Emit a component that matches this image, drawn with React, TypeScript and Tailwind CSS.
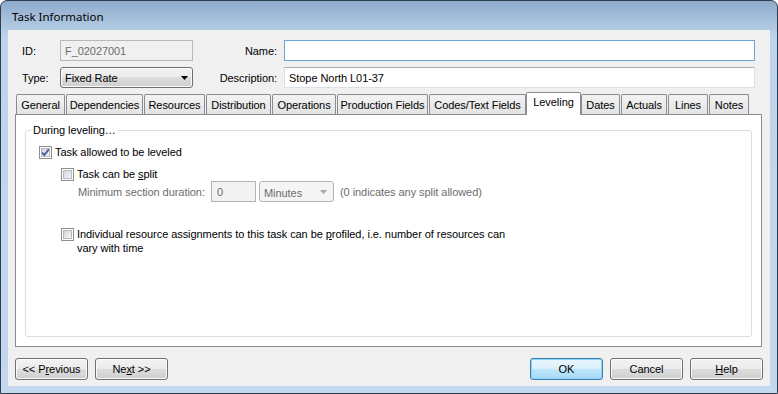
import React from "react";

const btnFace =
  "bg-[linear-gradient(to_bottom,#f2f2f2_0%,#ebebeb_50%,#dddddd_50%,#cfcfcf_100%)] border border-[#707070] rounded-[3px] shadow-[inset_0_0_0_1px_#fbfbfb]";

function Checkbox({ checked = false }: { checked?: boolean }) {
  return (
    <span className="relative w-[13px] h-[13px] shrink-0 border border-[#8e8f8f] bg-white p-[1px] flex">
      <span className="flex-1 border border-[#b4b9bf] bg-linear-to-br from-[#d3d6da] to-[#f7f7f7]" />
      {checked && (
        <svg
          className="absolute inset-0"
          width="11"
          height="11"
          viewBox="0 0 11 11"
        >
          <path
            d="M2.2 5.6 L4.4 8 L8.8 2.4"
            fill="none"
            stroke="#4a5f9f"
            strokeWidth="1.9"
          />
        </svg>
      )}
    </span>
  );
}

function Arrow({ color = "#000" }: { color?: string }) {
  return (
    <svg width="7" height="4" viewBox="0 0 7 4">
      <path d="M0 0 H7 L3.5 4 Z" fill={color} />
    </svg>
  );
}

function Button({
  children,
  primary = false,
}: {
  children: React.ReactNode;
  primary?: boolean;
}) {
  return (
    <div
      className={`w-[73px] h-[22px] flex items-center justify-center ${
        primary
          ? "bg-[linear-gradient(to_bottom,#eaf6fd_0%,#d9f0fc_50%,#bee6fd_50%,#a7d9f5_100%)] border border-[#3c7fb1] rounded-[3px] shadow-[inset_0_0_0_1px_#8fd3f5]"
          : btnFace
      }`}
    >
      {children}
    </div>
  );
}

const tabs: [string, number][] = [
  ["General", 49],
  ["Dependencies", 77],
  ["Resources", 61],
  ["Distribution", 65],
  ["Operations", 64],
  ["Production Fields", 91],
  ["Codes/Text Fields", 97],
  ["Leveling", 55],
  ["Dates", 39],
  ["Actuals", 46],
  ["Lines", 40],
  ["Notes", 40],
];

export default function App() {
  return (
    <div className="w-[778px] h-[394px] flex flex-col border border-[#2e3d50] rounded-t-[7px] bg-linear-to-b from-[#8fabcb] via-[#bcd4ec] via-[9%] to-[#c3d8ee] font-['Liberation_Sans',Arial,sans-serif] text-[11px] leading-[14px] tracking-[-0.06px] text-black">
      {/* title bar */}
      <div className="h-[29px] flex items-center pl-[11px] pt-[2px] font-['Noto_Sans',sans-serif] text-[11.5px] tracking-normal">
        Task Information
      </div>

      {/* client area */}
      <div className="ml-[7px] w-[762px] h-[356px] bg-[#f0f0f0] flex flex-col">
        {/* ID / Name */}
        <div className="flex items-center h-[21px] mt-[10px] pl-[14px]">
          <span className="w-[38px]">ID:</span>
          <div className="w-[133px] h-[21px] border border-[#b5b8bd] bg-[#f0f0f0] flex items-center pl-[4px] text-[#6d6d6d]">
            F_02027001
          </div>
          <span className="w-[91px] text-right pr-[7px]">Name:</span>
          <div className="w-[471px] h-[21px] border border-[#6ea3d6] bg-white" />
        </div>

        {/* Type / Description */}
        <div className="flex items-center h-[21px] mt-[6px] pl-[14px]">
          <span className="w-[38px]">Type:</span>
          <div
            className={`w-[133px] h-[21px] flex items-center justify-between pl-[4px] pr-[4px] ${btnFace}`}
          >
            <span>Fixed Rate</span>
            <Arrow />
          </div>
          <span className="w-[91px] text-right pr-[7px]">Description:</span>
          <div className="w-[471px] h-[21px] border border-[#dbdfe6] border-t-[#abadb3] bg-white flex items-center pl-[4px]">
            Stope North L01-37
          </div>
        </div>

        {/* tabs */}
        <div className="flex items-end h-[22px] mt-[4px] ml-[8px] gap-[1px]">
          {tabs.map(([label, w]) =>
            label === "Leveling" ? (
              <div
                key={label}
                style={{ width: w }}
                className="relative z-10 -mx-[1px] -mb-[1px] h-[23px] border border-[#898c95] border-b-0 bg-white flex justify-center pt-[2px] rounded-t-[2px]"
              >
                {label}
              </div>
            ) : (
              <div
                key={label}
                style={{ width: w }}
                className="h-[20px] border border-[#898c95] border-b-0 bg-linear-to-b from-[#f3f3f3] to-[#e3e3e3] flex justify-center pt-[3px] rounded-t-[2px]"
              >
                {label}
              </div>
            )
          )}
        </div>

        {/* tab panel */}
        <div className="ml-[7px] w-[747px] h-[233px] border border-[#898c95] bg-white">
          <fieldset className="ml-[9px] mt-[8px] w-[727px] h-[214px] border border-[#d5dfe5] rounded-[3px]">
            <legend className="ml-[5px] px-[2px] leading-[14px]">
              During leveling…
            </legend>

            <div className="flex items-center mt-[8px] ml-[13px] h-[14px]">
              <Checkbox checked />
              <span className="ml-[3px]">Task allowed to be leveled</span>
            </div>

            <div className="flex items-center mt-[8px] ml-[35px] h-[14px]">
              <Checkbox />
              <span className="ml-[3px]">
                Task can be <span className="underline">s</span>plit
              </span>
            </div>

            <div className="flex items-center h-[21px] ml-[52px] text-[#6d6d6d]">
              <span className="w-[133px]">Minimum section duration:</span>
              <div className="w-[45px] h-[21px] border border-[#b0b4b8] bg-[#f2f2f2] flex items-center pl-[5px]">
                0
              </div>
              <div className="ml-[3px] w-[75px] h-[21px] border border-[#b0b4b8] rounded-[3px] bg-[#f4f4f4] flex items-center justify-between pl-[4px] pr-[6px]">
                <span className="pt-[2px]">Minutes</span>
                <Arrow color="#a8a8a8" />
              </div>
              <span className="ml-[6px]">(0 indicates any split allowed)</span>
            </div>

            <div className="flex items-start mt-[25px] ml-[35px]">
              <span className="mt-[1px]">
                <Checkbox />
              </span>
              <span className="ml-[3px]">
                Individual resource assignments to this task can be{" "}
                <span className="underline">p</span>rofiled, i.e. number of
                resources can
                <br />
                vary with time
              </span>
            </div>
          </fieldset>
        </div>

        {/* buttons */}
        <div className="flex justify-between mt-[11px] px-[7px]">
          <div className="flex gap-[7px]">
            <Button>
              {"<< P"}
              <span className="underline">r</span>evious
            </Button>
            <Button>
              Ne<span className="underline">x</span>t {">>"}
            </Button>
          </div>
          <div className="flex gap-[7px]">
            <Button primary>OK</Button>
            <Button>Cancel</Button>
            <Button>
              <span className="underline">H</span>elp
            </Button>
          </div>
        </div>
      </div>
    </div>
  );
}
